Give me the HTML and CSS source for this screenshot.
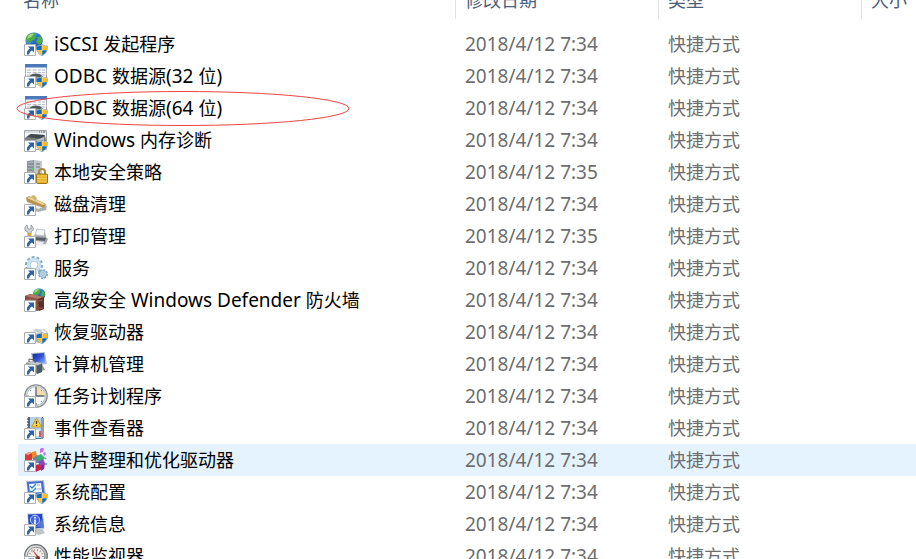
FILE: index.html
```html
<!DOCTYPE html>
<html lang="zh-CN">
<head>
<meta charset="utf-8">
<meta name="viewport" content="width=device-width, initial-scale=1">
<title>管理工具</title>
<link rel="stylesheet" href="styles.css">
</head>
<body>
<svg class="defs" aria-hidden="true">
  <defs>
    <linearGradient id="sea" x1="0" y1="0" x2="1" y2="1"><stop offset="0" stop-color="#a9dcf5"/><stop offset=".45" stop-color="#2b76d2"/><stop offset="1" stop-color="#123a86"/></linearGradient>
    <linearGradient id="steel" x1="0" y1="0" x2="1" y2="1"><stop offset="0" stop-color="#fafbfc"/><stop offset="1" stop-color="#8b949b"/></linearGradient>
    <linearGradient id="screen" x1="0" y1="0" x2="1" y2="1"><stop offset="0" stop-color="#1626a0"/><stop offset=".5" stop-color="#3155d6"/><stop offset="1" stop-color="#9cc2fa"/></linearGradient>
    <symbol id="arrow" viewBox="0 0 24 24">
      <path d="M.5 12.5h11v11H.5z" fill="#fff" stroke="#a9b0b7"/>
      <path d="M4 14.5h6v6l-2-2c-2 1-2.700 2.300-2.700 4H3c-.4-3 .7-5 3-6z" fill="#2f609f"/>
    </symbol>
    <symbol id="shield" viewBox="0 0 24 24">
      <path d="M18 12.300c1.600 1.200 3.300 1.700 5.300 1.700.4 4.600-1.200 7.800-5.300 9.700-4.100-1.900-5.700-5.100-5.300-9.700 2 0 3.700-.5 5.300-1.700z" fill="#fff" stroke="#7997b7" stroke-width=".8"/>
      <path d="M17.800 13v5h-4.800c-.3-1.200-.3-2-.2-3.500 1.900-.1 3.300-.5 5-1.500zM18.200 18.300h4.600c-.7 2.200-2 3.700-4.600 4.900z" fill="#1769b5"/>
      <path d="M18.200 13c1.500 1 3 1.400 4.900 1.500.1 1.500 0 2.300-.2 3.500h-4.700zM17.800 18.300h-4.600c.7 2.200 2 3.700 4.600 4.900z" fill="#ffbd24"/>
    </symbol>
    <symbol id="globe" viewBox="0 0 24 24">
      <circle cx="10" cy="9" r="8.700" fill="url(#sea)"/>
      <path d="M4 2.800c3-2.300 6.300-2 7.500-1L10 4l2 1-2 3-3 1-1 3-4-4c-.3-2 .5-4 2-5.200zM14 5l3-.8c1.400 2.600 1.600 5 .8 7L15 13l-3-3z" fill="#4fae43"/>
      <path d="M4 4c2-2.200 4-2.500 6-2L7 5 3 7z" fill="#c8f0a1" opacity=".7"/>
    </symbol>
    <symbol id="odbc" viewBox="0 0 24 24">
      <path d="M1.500.5h21v20h-21z" fill="#f7f8f9" stroke="#a4adb8"/><path d="M1 0h22v3.500H1z" fill="#4d78bc"/>
      <path d="M3 6h4m1.500 0h4m1.500 0h3m1 0h3M3 8.500h4m1.500 0h4m1.500 0h3m1 0h3M3 11h4m10 0h4" stroke="#b6bdc6"/>
      <path d="M5 14c0-6 14-6 14 0v4H9z" fill="#8b9399"/><path d="M6 12c2-3 10-3 12 0l-2 2c-2-2-6-2-8 0z" fill="#4d555b"/>
    </symbol>
    <symbol id="disk" viewBox="0 0 24 24">
      <path d="M10 16l8-4 6 3-1 4-7 2-5-2z" fill="#bbc0c4"/><path d="M11 16l7-3 5 2-7 3z" fill="#eef0f1"/>
    </symbol>
  </defs>
</svg>

<main class="list">
  <table class="files">
    <colgroup><col class="col-name"><col class="col-date"><col class="col-type"><col></colgroup>
    <thead>
      <tr>
        <th scope="col"><div class="head">名称</div></th>
        <th scope="col"><div class="head">修改日期</div></th>
        <th scope="col"><div class="head">类型</div></th>
        <th scope="col"><div class="head">大小</div></th>
      </tr>
    </thead>
    <tbody>
      <tr>
        <td><div class="name"><svg class="icon" viewBox="0 0 24 24"><use href="#globe"/><use href="#arrow"/><use href="#shield"/></svg><span><span class="latin">iSCSI </span>发起程序</span></div></td>
        <td class="latin">2018/4/12 7:34</td><td>快捷方式</td><td></td>
      </tr>
      <tr>
        <td><div class="name"><svg class="icon" viewBox="0 0 24 24"><use href="#odbc"/><use href="#arrow"/><use href="#shield"/></svg><span><span class="latin">ODBC </span>数据源<span class="latin">(32 </span>位<span class="latin">)</span></span></div></td>
        <td class="latin">2018/4/12 7:34</td><td>快捷方式</td><td></td>
      </tr>
      <tr>
        <td><div class="name"><svg class="icon" viewBox="0 0 24 24"><use href="#odbc"/><use href="#arrow"/><use href="#shield"/></svg><span><span class="latin">ODBC </span>数据源<span class="latin">(64 </span>位<span class="latin">)</span></span><svg class="mark" viewBox="0 0 334 35" aria-hidden="true"><ellipse cx="167" cy="17.500" rx="166" ry="17" fill="none" stroke="#f04444"/></svg></div></td>
        <td class="latin">2018/4/12 7:34</td><td>快捷方式</td><td></td>
      </tr>
      <tr>
        <td><div class="name"><svg class="icon" viewBox="0 0 24 24">
          <path d="M.5 2.500h22v19H.5z" fill="#f4f5f6" stroke="#a0a7ad"/><path d="M1 3h21v2H1z" fill="#d9dde0"/><path d="M15 4h1m1 0h1m1 0h2" stroke="#555"/>
          <path d="M1 10l5-4 15 1 1 6-6 4-15-4z" fill="#777e82"/><path d="M3 9l4-3 14 1-4 4z" fill="#42484c"/><path d="M12 12l8-3v5l-5 3z" fill="#b9bec1"/>
          <use href="#arrow"/><use href="#shield"/></svg><span><span class="latin">Windows </span>内存诊断</span></div></td>
        <td class="latin">2018/4/12 7:34</td><td>快捷方式</td><td></td>
      </tr>
      <tr>
        <td><div class="name"><svg class="icon" viewBox="0 0 24 24">
          <path d="M3 1l7-1v18H3z" fill="#8d969c"/><path d="M10 0l8 1v18h-8z" fill="#c0c7cb"/><path d="M4 2l5-.5V16H4z" fill="#a9b2b7"/><path d="M4 4h5M4 7h5M4 10h5M12 4h4M12 7h4" stroke="#68747c"/><path d="M8 9h1" stroke="#52d465" stroke-width="2"/>
          <path d="M15 15v-3c0-4 6-4 6 0v3" fill="none" stroke="#a68b45" stroke-width="2"/><rect x="12.500" y="14" width="11" height="9.500" rx="1" fill="#e1ad26" stroke="#9a741c"/><path d="M13 16h10M13 18.500h10M13 21h10" stroke="#f7d263"/>
          <use href="#arrow"/></svg><span>本地安全策略</span></div></td>
        <td class="latin">2018/4/12 7:35</td><td>快捷方式</td><td></td>
      </tr>
      <tr>
        <td><div class="name"><svg class="icon" viewBox="0 0 24 24">
          <path d="M7 15l10-4 6 3-1 4-8 2-7-3z" fill="#aab0b4"/><path d="M8 14l9-3 5 3-8 3z" fill="#eff1f2"/>
          <path d="M2 6l3-2 17 8-2 4L3 10z" fill="#b6924f"/><path d="M3 6l3-1 15 7-2 1z" fill="#efd89f"/><path d="M7 4l3-1 3 3-2 3z" fill="#d2b26b"/>
          <use href="#arrow"/></svg><span>磁盘清理</span></div></td>
        <td class="latin">2018/4/12 7:34</td><td>快捷方式</td><td></td>
      </tr>
      <tr>
        <td><div class="name"><svg class="icon" viewBox="0 0 24 24">
          <path d="M10 12l2-4h9l1 5 2 2-2 5-9 1-4-3z" fill="#a4aaae"/><path d="M13 5l8 1-1 6-9-1z" fill="#f5f6f7" stroke="#abb0b3" stroke-width=".7"/><path d="M10 13l12 1-1 3-9-1z" fill="#555e63"/><path d="M12 17l8 1-2 4-8-2z" fill="#eceff1"/>
          <path d="M3 1C0 3 0 7 4 8v5h3V8c3-1 3-5 0-7v4H4z" fill="#d5d9dc" stroke="#858c91" stroke-width=".8"/><path d="M4 9h3v4H4z" fill="#d5aa38"/>
          <use href="#arrow"/></svg><span>打印管理</span></div></td>
        <td class="latin">2018/4/12 7:35</td><td>快捷方式</td><td></td>
      </tr>
      <tr>
        <td><div class="name"><svg class="icon" viewBox="0 0 24 24">
          <circle cx="10" cy="9" r="7.500" fill="none" stroke="#7ea6c6" stroke-width="3" stroke-dasharray="2.700 2"/><circle cx="10" cy="9" r="6" fill="#fff" stroke="#c5dff0" stroke-width="2.500"/><circle cx="10" cy="9" r="4" fill="none" stroke="#86aeca" stroke-width=".7"/>
          <circle cx="19" cy="18" r="4" fill="none" stroke="#769fbf" stroke-width="2" stroke-dasharray="1.800 1.300"/><circle cx="19" cy="18" r="3.500" fill="#bcd9ec" stroke="#84abc7" stroke-width=".8"/><circle cx="19" cy="18" r="1.300" fill="#fff" stroke="#7098b5" stroke-width=".7"/>
          <use href="#arrow"/></svg><span>服务</span></div></td>
        <td class="latin">2018/4/12 7:34</td><td>快捷方式</td><td></td>
      </tr>
      <tr>
        <td><div class="name"><svg class="icon" viewBox="0 0 24 24">
          <svg x="8" y="0" width="17" height="17" viewBox="0 0 24 24"><use href="#globe"/></svg>
          <path d="M1 8l5-2 14 3v12l-7 2-3-1V14H1z" fill="#824a3c"/><path d="M1 8l5-2 14 3-6 2z" fill="#b37866"/><path d="M14 11l6-2v12l-5 2z" fill="#5d3027"/><path d="M2 11l11 2m-7-4v3m4-2v3m1 4h3m0 3h5m-5-7l5-1" stroke="#a96d5c" stroke-width=".7"/>
          <use href="#arrow"/></svg><span>高级安全<span class="latin"> Windows Defender </span>防火墙</span></div></td>
        <td class="latin">2018/4/12 7:34</td><td>快捷方式</td><td></td>
      </tr>
      <tr>
        <td><div class="name"><svg class="icon" viewBox="0 0 24 24">
          <path d="M1 14l8-4 11-1 4 4v6l-9 4-14-4z" fill="#aeb3b6"/><path d="M2 13l8-4h9l4 4-8 3z" fill="#f0f2f3"/><path d="M12 9l7 1-3 3-7-2z" fill="#c5cbce"/>
          <use href="#arrow"/><use href="#shield"/></svg><span>恢复驱动器</span></div></td>
        <td class="latin">2018/4/12 7:34</td><td>快捷方式</td><td></td>
      </tr>
      <tr>
        <td><div class="name"><svg class="icon" viewBox="0 0 24 24">
          <path d="M7 1l14-1 2 12-14 2z" fill="#b6c0cb"/><path d="M8.500 2L20 1l1.500 10-12 1z" fill="url(#screen)"/><path d="M14 12l4 0 3 6-5 1z" fill="#8b969d"/>
          <path d="M2 11l4-2 12 2v9l-7 2-9-6z" fill="#78858d"/><path d="M2 11l4-2 12 2-4 2z" fill="#c4cbd0"/><path d="M5 10V7l6 1v3" fill="none" stroke="#535e65"/><path d="M13 14l5-2v8l-5 2z" fill="#4e5a62"/>
          <use href="#arrow"/></svg><span>计算机管理</span></div></td>
        <td class="latin">2018/4/12 7:34</td><td>快捷方式</td><td></td>
      </tr>
      <tr>
        <td><div class="name"><svg class="icon" viewBox="0 0 24 24">
          <circle cx="12" cy="12" r="11.200" fill="#e6e8e9" stroke="#899197" stroke-width="1.300"/><circle cx="12" cy="12" r="9.400" fill="#f5f9fc" stroke="#b0b6ba"/><path d="M12 3a9 9 0 0 1 9 9h-9z" fill="#f1dcab"/><path d="M12 3v9h8M12 19v2" fill="none" stroke="#596670" stroke-width="1.300"/><path d="M3 12h2m14 0h2M6 6l1 1m10-1l1 1m-1 10l1 1" stroke="#89939a"/>
          <use href="#arrow"/></svg><span>任务计划程序</span></div></td>
        <td class="latin">2018/4/12 7:34</td><td>快捷方式</td><td></td>
      </tr>
      <tr>
        <td><div class="name"><svg class="icon" viewBox="0 0 24 24">
          <path d="M4 1h15v22H4z" fill="#577298"/><path d="M6 1h12v21H6z" fill="#b8d2ec"/><path d="M17 2h3v20l-3 1z" fill="#8b9eb5"/><path d="M3 3h3M3 6h3M3 9h3M3 12h3" stroke="#555f69" stroke-width="1.500"/><path d="M12 14h4v6h-4z" fill="#eef4fa"/><path d="M16 15v6" stroke="#e25257" stroke-width="2"/>
          <path d="M12.500 2l5 9h-10z" fill="#ffdb32" stroke="#c49920"/><path d="M12.500 5v3m0 1v1" stroke="#453914" stroke-width="1.300"/>
          <use href="#arrow"/></svg><span>事件查看器</span></div></td>
        <td class="latin">2018/4/12 7:34</td><td>快捷方式</td><td></td>
      </tr>
      <tr class="hover">
        <td><div class="name"><svg class="icon" viewBox="0 0 24 24">
          <path d="M1 6l4-2 3 1v8H1z" fill="#d73b36"/><path d="M8 4l4-1 1 5-5 3z" fill="#ed8b27"/><path d="M1 6l4-2 3 1-4 2z" fill="#f4aa8c"/><path d="M9 10l4-3 4 3v5H9z" fill="#6b87a5"/>
          <path d="M13 8l4-2 4 4-4 4-4-2z" fill="#35b36d"/><path d="M14 14l5-3 2 4-4 4z" fill="#8749ba"/><path d="M11 17l5-1 2 5-6 3z" fill="#c62554"/><path d="M17 18l4-3-1 6-3 2z" fill="#7d2c9d"/><path d="M16 1l2-2 2 2-1 3-3 1zM19 5l2-1 1 2-2 2z" fill="#cc72df"/><path d="M21 10l1 1m0 4v2" stroke="#4d9ad3" stroke-width="1.500"/>
          <use href="#arrow"/></svg><span>碎片整理和优化驱动器</span></div></td>
        <td class="latin">2018/4/12 7:34</td><td>快捷方式</td><td></td>
      </tr>
      <tr>
        <td><div class="name"><svg class="icon" viewBox="0 0 24 24">
          <path d="M2 1l18-1 2 15-17 4z" fill="#bcc5cf"/><path d="M3 2l16-1 1.500 12L4 15z" fill="#476bd0"/><path d="M5 4l12-1 1 9-12 1z" fill="#f6fafe"/><path d="M6 6l2 2 4-4M6 11l2 1 4-4" fill="none" stroke="#2986bd" stroke-width="1.300"/><path d="M13 5h3m-3 4h4" stroke="#9aaec5"/>
          <use href="#arrow"/><use href="#shield"/></svg><span>系统配置</span></div></td>
        <td class="latin">2018/4/12 7:34</td><td>快捷方式</td><td></td>
      </tr>
      <tr>
        <td><div class="name"><svg class="icon" viewBox="0 0 24 24">
          <path d="M12 17l6-1 3 5-6 2-4-1z" fill="#bfc6ca"/><path d="M3 1.500L19 1l1.500 16L5 19z" fill="#c2cad2"/><path d="M4 2.500L18 2l1.500 13.500L5 17z" fill="#2445c5"/><path d="M12 15l7-9 .8 9.500z" fill="#5875da"/><circle cx="11" cy="8" r="4.700" fill="#4568d8" stroke="#b8cdff"/><path d="M11 5v1.500m0 1V12" stroke="#fff" stroke-width="1.600"/>
          <use href="#arrow"/></svg><span>系统信息</span></div></td>
        <td class="latin">2018/4/12 7:34</td><td>快捷方式</td><td></td>
      </tr>
      <tr>
        <td><div class="name"><svg class="icon" viewBox="0 0 24 24">
          <circle cx="12" cy="12" r="11.300" fill="url(#steel)" stroke="#686e72" stroke-width="1.200"/><circle cx="12" cy="12" r="8.800" fill="#f3efed" stroke="#929492"/><path d="M5 13a7 7 0 0 1 14 0" fill="none" stroke="#9b9b99" stroke-dasharray="1 2" stroke-width="2"/><path d="M7 4l7 11 2-1z" fill="#d1453c"/><circle cx="14" cy="14" r="2" fill="#6a3934"/>
          <use href="#arrow"/></svg><span>性能监视器</span></div></td>
        <td class="latin">2018/4/12 7:34</td><td>快捷方式</td><td></td>
      </tr>
    </tbody>
  </table>
</main>
</body>
</html>
```
FILE: styles.css
```css
* {
  box-sizing: border-box;
}

body {
  margin: 0;
  background: #fff;
  color: #000;
  font-family: "Noto Sans", "Noto Sans CJK SC", sans-serif;
  font-size: 18px;
  line-height: 24px;
}

.defs {
  position: absolute;
  width: 0;
  height: 0;
}

/* The list is scrolled so that the header is cut by the top edge. */
.list {
  height: 100vh;
  overflow: hidden;
  padding-left: 18px;
}

.files {
  width: 100%;
  margin-top: -19px;
  border-collapse: collapse;
  table-layout: fixed;
}

.col-name {
  width: 438px;
}

.col-date,
.col-type {
  width: 203px;
}

th {
  padding: 0 0 9px;
  color: #4c607a;
  font-weight: 400;
  text-align: left;
  white-space: nowrap;
}

.head {
  display: flex;
  align-items: center;
  height: 38px;
  padding-left: 9px;
  border-right: 1px solid #e2e2e2;
}

th:first-child .head {
  padding-left: 5px;
}

th:last-child .head {
  border-right: 0;
}

td {
  height: 32px;
  padding: 0 0 0 9px;
  color: #6d6d6d;
  vertical-align: middle;
  white-space: nowrap;
}

td:first-child {
  padding-left: 6px;
  color: #000;
}

.hover {
  background: #e5f3ff;
}

.name {
  position: relative;
  display: flex;
  align-items: center;
  gap: 6px;
}

.icon {
  flex: none;
  width: 24px;
  height: 24px;
}

.latin {
  font-size: 19px;
}

/* Hand-drawn ring around one entry, over the row. */
.mark {
  position: absolute;
  top: -5px;
  left: -8px;
  width: 334px;
  height: 35px;
}
```
